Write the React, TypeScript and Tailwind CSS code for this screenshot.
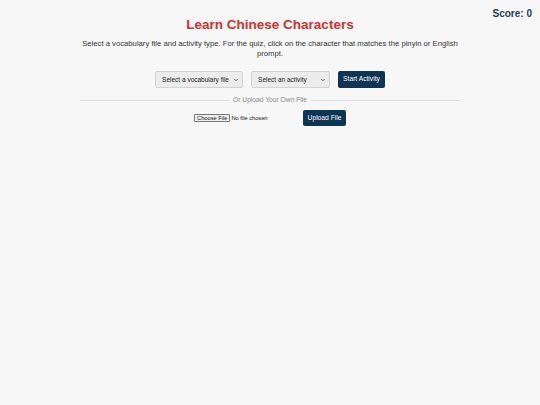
import { ChevronDown } from 'lucide-react';

const font = { fontFamily: '"Liberation Sans", Arial, sans-serif' };

function FakeSelect({ label, width }: { label: string; width: string }) {
  return (
    <div
      className={`${width} h-[17px] flex items-center justify-between pl-[6px] pr-[3px] bg-[#ececec] border border-[#d3d3d3] rounded-[2px] text-[6.5px] text-[#222]`}
    >
      <span className="whitespace-nowrap">{label}</span>
      <ChevronDown className="w-[6px] h-[6px] text-[#333] shrink-0" strokeWidth={3} />
    </div>
  );
}

export default function App() {
  return (
    <div className="min-h-[405px] bg-[#f7f7f7] relative" style={font}>
      {/* Score badge */}
      <div className="absolute top-[8px] right-[8px] text-[10px] font-bold text-[#1c3d57] leading-[12px]">
        Score: 0
      </div>

      <div className="w-[380px] mx-auto pt-[17px] flex flex-col items-center">
        <h1 className="text-[13.5px] leading-[16px] font-bold text-[#d32f2f]">Learn Chinese Characters</h1>

        <p className="mt-[6px] text-center text-[7.7px] leading-[9.5px] text-[#333]">
          Select a vocabulary file and activity type. For the quiz, click on the character that matches the pinyin or English prompt.
        </p>

        {/* Controls */}
        <div className="mt-[13px] flex items-center">
          <FakeSelect label="Select a vocabulary file" width="w-[88px]" />
          <div className="ml-[8px]">
            <FakeSelect label="Select an activity" width="w-[79px]" />
          </div>
          <button className="ml-[8px] h-[17px] px-[5px] bg-[#0e3553] text-white text-[6.7px] rounded-[2px]">
            Start Activity
          </button>
        </div>

        {/* Divider */}
        <div className="mt-[8px] w-full flex items-center gap-[4px]">
          <div className="flex-1 h-px bg-[#dddddd]" />
          <span className="text-[6.7px] leading-[8px] text-[#888]">Or Upload Your Own File</span>
          <div className="flex-1 h-px bg-[#dddddd]" />
        </div>

        {/* Upload */}
        <div className="mt-[6px] flex items-center">
          <label className="w-[105px] flex items-center gap-[1px] text-[5.7px] text-[#111] cursor-pointer">
            <span className="h-[8px] px-[2px] flex items-center bg-[#efefef] border border-[#767676] rounded-[1px]">
              Choose File
            </span>
            <span className="whitespace-nowrap">No file chosen</span>
            <input type="file" className="hidden" />
          </label>
          <button className="ml-[4px] h-[16px] px-[4.5px] bg-[#0e3553] text-white text-[6.7px] rounded-[2px]">
            Upload File
          </button>
        </div>
      </div>
    </div>
  );
}
